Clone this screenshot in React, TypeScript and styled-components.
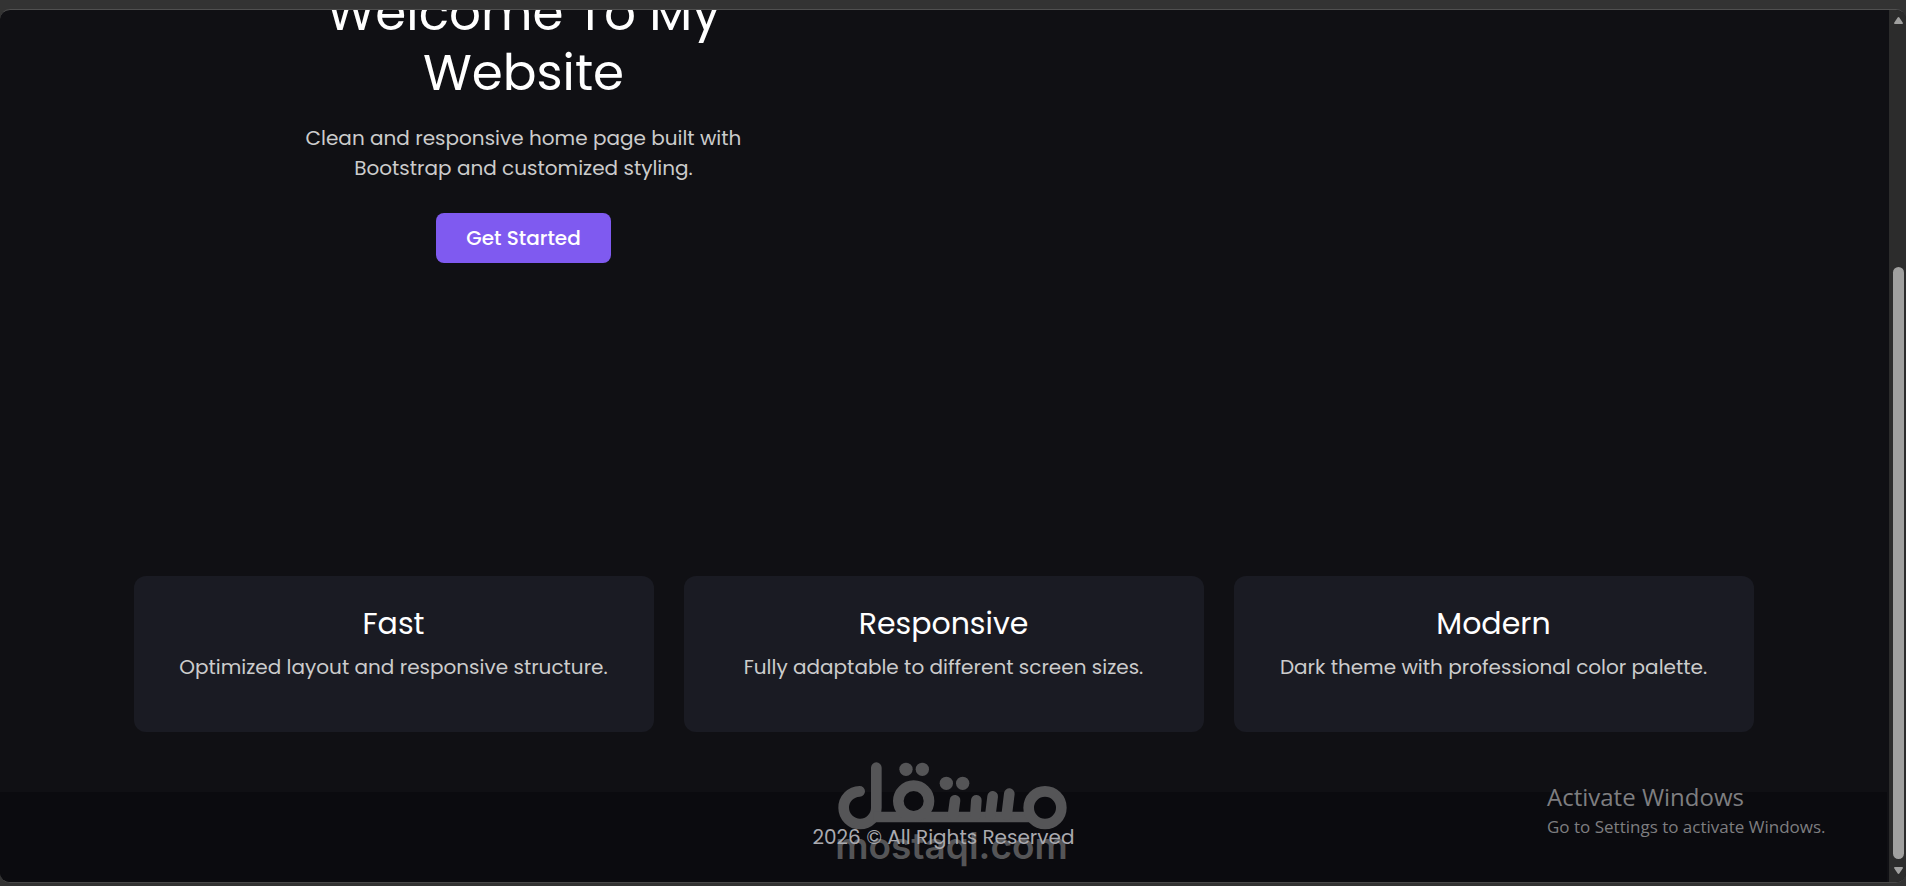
import React from "react";
import styled, { createGlobalStyle } from "styled-components";

const GlobalStyle = createGlobalStyle`
  * { box-sizing: border-box; }
  body {
    margin: 0;
    background: #333333;
    color: #ffffff;
    font-family: Poppins, Inter, "Liberation Sans", sans-serif;
    font-size: 20px;
    line-height: 30px;
  }
  h1, h2, p { margin: 0; font-weight: 400; }
`;

const Frame = styled.div`
  position: relative;
  display: flex;
  flex-direction: column;
  height: 100vh;
  padding: 9px 0 3px;
`;

const Window = styled.div`
  flex: 1;
  min-height: 0;
  display: flex;
  overflow: hidden;
  border-top: 1px solid #505050;
  border-bottom: 1px solid #484848;
  border-radius: 10px;
  background: #101014;
`;

const Page = styled.div`
  flex: 1;
  min-width: 0;
  display: flex;
  flex-direction: column;
  justify-content: flex-end;
  overflow: hidden;
`;

const Container = styled.div`
  width: 100%;
  max-width: 1650px;
  margin: 0 auto;
  padding: 0 15px;
`;

const Hero = styled.section`
  display: flex;
  flex-direction: column;
  align-items: center;
  width: 480px;
  max-width: 100%;
  margin-left: 150px;
  padding-bottom: 313px;
  text-align: center;
`;

const HeroTitle = styled.h1`
  width: 400px;
  font-size: 50px;
  line-height: 60px;
`;

const Lead = styled.p`
  margin: 20px 0 30px;
  color: #cccccc;
`;

const PrimaryButton = styled.button`
  height: 50px;
  padding: 0 30px;
  border: 0;
  border-radius: 8px;
  background: #7f5af0;
  color: #ffffff;
  font: inherit;
  font-weight: 500;
  cursor: pointer;
`;

const Cards = styled.section`
  display: grid;
  grid-template-columns: repeat(3, 1fr);
  gap: 30px;
  padding-bottom: 60px;
`;

const Card = styled.article`
  padding: 30px 30px 50px;
  border-radius: 12px;
  background: #1a1b23;
  text-align: center;
`;

const CardTitle = styled.h2`
  margin-bottom: 10px;
  font-size: 30px;
  line-height: 36px;
`;

const CardText = styled.p`
  color: #cccccc;
`;

const Footer = styled.footer`
  position: relative;
  padding: 30px;
  background: #0b0b0f;
  color: #aaaaaf;
  text-align: center;
`;

const FooterText = styled.p`
  position: relative;
`;

const Watermark = styled.div`
  position: absolute;
  left: 50%;
  bottom: 20px;
  display: flex;
  flex-direction: column;
  align-items: center;
  width: 232px;
  margin-left: -108px;
  color: #555557;
  font-family: Inter, "Liberation Sans", sans-serif;
  font-size: 37px;
  font-weight: 600;
  line-height: 32px;
`;

const Activation = styled.aside`
  position: absolute;
  right: 75px;
  bottom: 45px;
  width: 284px;
  color: #7e7e80;
  font-family: "Segoe UI", "Open Sans", sans-serif;
  font-size: 17px;
  line-height: 28px;
  white-space: nowrap;
`;

const ActivationTitle = styled.p`
  font-size: 24px;
  line-height: 32px;
`;

const Scrollbar = styled.div`
  display: flex;
  flex-direction: column;
  align-items: center;
  width: 19px;
  padding: 7px 2px 8px 4px;
  border-left: 2px solid #101014;
  background: #2c2c2c;
`;

const Track = styled.div`
  flex: 1;
  display: flex;
  flex-direction: column;
  justify-content: flex-end;
  width: 11px;
  padding: 8px 0;
`;

const Thumb = styled.div`
  height: 71.6%;
  border-radius: 6px;
  background: #a0a09f;
`;

const features = [
  { title: "Fast", text: "Optimized layout and responsive structure." },
  { title: "Responsive", text: "Fully adaptable to different screen sizes." },
  { title: "Modern", text: "Dark theme with professional color palette." },
];

function Arrow({ down = false }: { down?: boolean }) {
  return (
    <svg width="9" height="7" viewBox="0 0 9 7" fill="#a0a09f" aria-hidden="true">
      <path d={down ? "M0 1Q0 0 1 0H8Q9 0 9 1L5.5 6.3Q4.5 7.5 3.5 6.3Z" : "M0 6Q0 7 1 7H8Q9 7 9 6L5.5 .7Q4.5-.5 3.5 .7Z"} />
    </svg>
  );
}

function WatermarkLogo() {
  return (
    <svg width="230" height="68" viewBox="112 68 690 204" aria-hidden="true">
      <g fill="none" stroke="currentColor" strokeWidth="32" strokeLinecap="round">
        <path d="M180 156A49 49 0 1 0 230 205V85" />
        <path d="M222 233H700" strokeLinecap="butt" />
        <circle cx="342" cy="185" r="46" />
        <circle cx="736" cy="205" r="49" />
        <path d="M466 183L460 228M530 183L527 228M579 171L572 228M629 163L621 228" />
      </g>
      <g fill="currentColor">
        <circle cx="319" cy="90" r="20" />
        <circle cx="368" cy="90" r="20" />
        <circle cx="440" cy="132" r="20" />
        <circle cx="489" cy="132" r="20" />
      </g>
    </svg>
  );
}

export default function App() {
  return (
    <Frame>
      <GlobalStyle />
      <Window>
        <Page>
          <Container>
            <Hero>
              <HeroTitle>Welcome To My Website</HeroTitle>
              <Lead>
                Clean and responsive home page built with Bootstrap and customized styling.
              </Lead>
              <PrimaryButton type="button">Get Started</PrimaryButton>
            </Hero>
            <Cards>
              {features.map(({ title, text }) => (
                <Card key={title}>
                  <CardTitle>{title}</CardTitle>
                  <CardText>{text}</CardText>
                </Card>
              ))}
            </Cards>
          </Container>
          <Footer>
            <Watermark>
              <WatermarkLogo />
              <span>mostaql.com</span>
            </Watermark>
            <FooterText>2026 © All Rights Reserved</FooterText>
          </Footer>
        </Page>
        <Scrollbar aria-hidden="true">
          <Arrow />
          <Track>
            <Thumb />
          </Track>
          <Arrow down />
        </Scrollbar>
      </Window>
      <Activation>
        <ActivationTitle>Activate Windows</ActivationTitle>
        <p>Go to Settings to activate Windows.</p>
      </Activation>
    </Frame>
  );
}
